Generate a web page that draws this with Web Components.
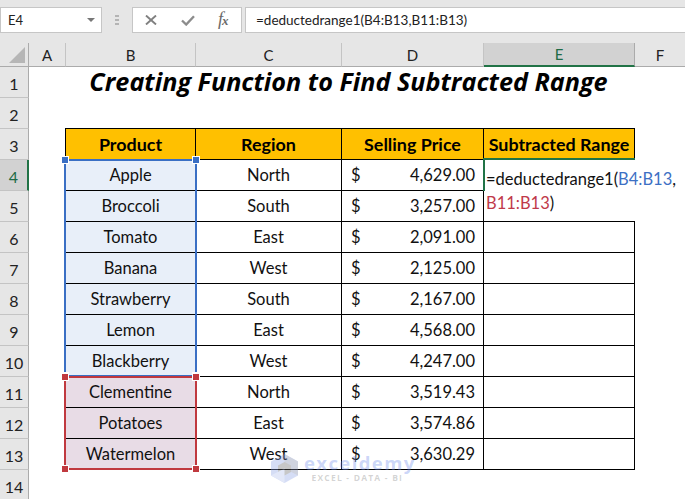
<!DOCTYPE html>
<html lang="en"><head><meta charset="utf-8"><title>Subtracted Range</title>
<style>
html,body{margin:0;padding:0;background:#fff;overflow:hidden}
body{width:685px;height:499px;font-family:"Lato","Open Sans",sans-serif}
</style></head>
<body>
<xl-app></xl-app>
<script>
const FONT='"Lato","Open Sans",sans-serif';
class XlFormulaBar extends HTMLElement{
  constructor(){super();this.attachShadow({mode:'open'}).innerHTML=`<style>
  :host{display:flex;height:43px;box-sizing:border-box;background:#e6e6e6;padding:7px 0 10px;font-family:${FONT};color:#222}
  .box{background:#fff;border:1px solid #c6c6c6;box-sizing:border-box;height:26px;display:flex;align-items:center}
  .name{width:102px;padding:0 6px 0 7px;justify-content:space-between;font-size:13px}
  .tri{width:0;height:0;border:4px solid transparent;border-top:4px solid #777;border-bottom:0}
  .dots{width:30px;display:flex;flex-direction:column;align-items:center;justify-content:center;gap:2px}
  .dots i{width:4px;height:2px;background:#b4b4b4;display:block}
  .btns{width:110px;padding:0 11px 0 12px;justify-content:space-between}
  .fx{font:italic 400 18px/20px "Liberation Serif",serif;color:#6a6a6a;width:12px;white-space:nowrap;display:block}
  .fx small{font-size:13px;font-weight:700;margin-left:-1px}
  .input{flex:1;margin-left:3px;padding-left:10px;font-size:13.5px;border-right:0;white-space:nowrap;color:#222}
  svg{display:block}
  </style>
  <div class="box name"><span>E4</span><span class="tri"></span></div>
  <div class="dots"><i></i><i></i><i></i></div>
  <div class="box btns">
    <svg width="12" height="10" viewBox="0 0 12 10"><path d="M1 .5l10 9M11 .5L1 9.500" stroke="#808080" stroke-width="1.9" fill="none"/></svg>
    <svg width="14" height="11" viewBox="0 0 14 11"><path d="M1 5.500l4.200 4L13 1.200" stroke="#8c8c8c" stroke-width="2.400" fill="none"/></svg>
    <span class="fx">f<small>x</small></span>
  </div>
  <div class="box input"><slot></slot></div>`;}
}
customElements.define('xl-formula-bar',XlFormulaBar);

const COLS='29px 37px 130px 146px 142px 151px 1fr';
class XlColHeaders extends HTMLElement{
  constructor(){super();const c=['A','B','C','D','E','F'];
  this.attachShadow({mode:'open'}).innerHTML=`<style>
  :host{display:grid;grid-template-columns:${COLS};height:24px;background:#e6e6e6;font-family:${FONT};font-size:15px;color:#222}
  div{box-sizing:border-box;display:flex;align-items:center;justify-content:center;border-bottom:1px solid #ababab;border-right:1px solid #c4c4c4;height:24px}
  .corner{border-right:1px solid #ababab;align-items:flex-end;justify-content:flex-end;padding:0 3px 3px 0}
  .corner svg{display:block}
  .on{background:#d2d2d2;color:#1d6b45;border-bottom:2px solid #217346;border-right-color:#ababab}
  .l{border-right:0}
  </style><div class="corner"><svg width="16" height="16" viewBox="0 0 16 16"><path d="M16 0V16H0Z" fill="#b6b6b6"/></svg></div>`+
  c.map(x=>`<div class="${x==='E'?'on':''} ${x==='F'?'l':''}">${x}</div>`).join('');}
}
customElements.define('xl-col-headers',XlColHeaders);

class XlRow extends HTMLElement{
  static get observedAttributes(){return['n']}
  constructor(){super();this.attachShadow({mode:'open'}).innerHTML=`<style>
  :host{display:grid;grid-template-columns:${COLS};height:31px;font-family:${FONT}}
  .h{box-sizing:border-box;background:#e6e6e6;border-right:1px solid #ababab;border-bottom:1px solid #c4c4c4;display:flex;align-items:center;justify-content:center;font-size:16px;color:#222;padding-top:2px}
  :host([active]) .h{background:#d2d2d2;color:#1d6b45;border-right:2px solid #217346}
  </style><div class="h"></div><slot></slot>`;}
  attributeChangedCallback(n,o,v){this.shadowRoot.querySelector('.h').textContent=v}
}
customElements.define('xl-row',XlRow);

class XlCell extends HTMLElement{
  constructor(){super();this.attachShadow({mode:'open'}).innerHTML=`<style>
  :host{display:flex;box-sizing:border-box;align-items:center;justify-content:center;font-size:16.5px;color:#111;min-width:0;white-space:nowrap}
  :host([b]){border-right:1px solid #000;border-bottom:1px solid #000}
  :host([hd]){background:#ffc000;font-weight:700;color:#000;font-size:17.9px}
  :host([in]){background:#e8eff9}
  :host([re]){background:#e8dce6}
  :host([acct]){justify-content:space-between;padding:0 8px 0 9px}
  </style><slot></slot>`;}
}
customElements.define('xl-cell',XlCell);

class XlRange extends HTMLElement{
  constructor(){super();this.attachShadow({mode:'open'}).innerHTML=`<style>
  :host{position:absolute;box-sizing:border-box;border:2px solid var(--c);display:block;pointer-events:none}
  i{position:absolute;width:6px;height:6px;background:var(--c);outline:1px solid #fff;display:block}
  .a{left:-4px;top:-4px}.b{right:-4px;top:-4px}.c{left:-4px;bottom:-4px}.d{right:-4px;bottom:-4px}
  </style><i class="a"></i><i class="b"></i><i class="c"></i><i class="d"></i>`;}
}
customElements.define('xl-range',XlRange);

class XlEditor extends HTMLElement{
  constructor(){super();this.attachShadow({mode:'open'}).innerHTML=`<style>
  :host{position:absolute;box-sizing:border-box;background:#fff;display:block;font-family:${FONT};font-size:16.5px;line-height:24px;color:#111;padding:7px 0 0 2px;white-space:nowrap}
  .bl{color:#3d70c4}.rd{color:#c0394a}
  </style><span>=deductedrange1(<span class="bl">B4:B13</span>,<br><span class="rd">B11:B13</span>)</span>`;}
}
customElements.define('xl-editor',XlEditor);

class XlWatermark extends HTMLElement{
  constructor(){super();this.attachShadow({mode:'open'}).innerHTML=`<style>
  :host{position:absolute;display:flex;gap:6px;pointer-events:none;font-family:"Open Sans",sans-serif}
  .t{display:flex;flex-direction:column;align-items:center;height:29px}
  .n{font-size:18.5px;font-weight:700;line-height:20px;color:rgba(110,140,235,.36);margin-top:-1px;letter-spacing:1.4px;white-space:nowrap}
  .s{font-size:8.5px;font-weight:700;line-height:10px;color:rgba(120,120,120,.32);letter-spacing:1.2px;white-space:nowrap;margin-right:5px}
  svg{display:block;opacity:.36}
  </style><svg width="27" height="29" viewBox="0 0 27 29"><path d="M13.500 0L27 7.500V21.500L13.500 29L0 21.500V7.500Z" fill="#8ea4e6"/><path d="M13.500 0L27 7.500V21.500L13.500 14.500Z" fill="#7c86a8"/><path d="M13.500 8L20 11.500V18L13.500 21.500L7 18V11.500Z" fill="#666"/><path d="M0 21.500L13.500 14.500V29Z" fill="#b3c2ee"/></svg>
  <div class="t"><div class="n">exceldemy</div><div class="s">EXCEL - DATA - BI</div></div>`;}
}
customElements.define('xl-watermark',XlWatermark);

class XlSheet extends HTMLElement{
  constructor(){super();
  const data=[['Apple','North','4,629.00'],['Broccoli','South','3,257.00'],['Tomato','East','2,091.00'],['Banana','West','2,125.00'],['Strawberry','South','2,167.00'],['Lemon','East','4,568.00'],['Blackberry','West','4,247.00'],['Clementine','North','3,519.43'],['Potatoes','East','3,574.86'],['Watermelon','West','3,630.29']];
  const money=v=>`<xl-cell b acct><span>$</span><span>${v}</span></xl-cell>`;
  let rows=`<xl-row n="1"></xl-row><xl-row n="2"></xl-row>
  <xl-row n="3"><xl-cell></xl-cell><xl-cell b hd>Product</xl-cell><xl-cell b hd>Region</xl-cell><xl-cell b hd>Selling Price</xl-cell><xl-cell b hd>Subtracted Range</xl-cell></xl-row>`;
  data.forEach((d,i)=>{rows+=`<xl-row n="${i+4}" ${i===0?'active':''}><xl-cell></xl-cell><xl-cell b ${i<7?'in':'re'}>${d[0]}</xl-cell><xl-cell b>${d[1]}</xl-cell>${money(d[2])}<xl-cell b></xl-cell></xl-row>`});
  rows+=`<xl-row n="14"></xl-row>`;
  this.attachShadow({mode:'open'}).innerHTML=`<style>
  :host{display:block;position:relative;height:432px;background:#fff}
  .title{position:absolute;left:29px;width:639px;top:-3px;display:flex;justify-content:center;font:italic 700 25.2px/35px "Open Sans",sans-serif;color:#000;white-space:nowrap}
  .tb{position:absolute;left:65px;top:61px;width:570px;height:1px;background:#000}
  .tl{position:absolute;left:65px;top:61px;width:1px;height:342px;background:#000}
  </style>
  <div class="tb"></div><div class="tl"></div>
  ${rows}
  <div class="title">Creating Function to Find Subtracted Range</div>
  <xl-range style="--c:#3a6fc4;left:64px;top:92px;width:133px;height:218px"></xl-range>
  <xl-range style="--c:#c0393f;left:64px;top:309px;width:133px;height:94px"></xl-range>
  <xl-editor style="left:484px;top:93px;width:201px;height:61px"></xl-editor>
  <div style="position:absolute;left:483px;top:91px;width:152px;height:2px;background:#217346"></div>
  <div style="position:absolute;left:483px;top:91px;width:2px;height:33px;background:#217346"></div>
  <xl-watermark style="left:271px;top:387px"></xl-watermark>`;}
}
customElements.define('xl-sheet',XlSheet);

class XlApp extends HTMLElement{
  constructor(){super();this.attachShadow({mode:'open'}).innerHTML=`<style>:host{display:block;width:685px;height:499px;overflow:hidden}</style>
  <xl-formula-bar>=deductedrange1(B4:B13,B11:B13)</xl-formula-bar><xl-col-headers></xl-col-headers><xl-sheet></xl-sheet>`;}
}
customElements.define('xl-app',XlApp);
</script>
</body></html>
